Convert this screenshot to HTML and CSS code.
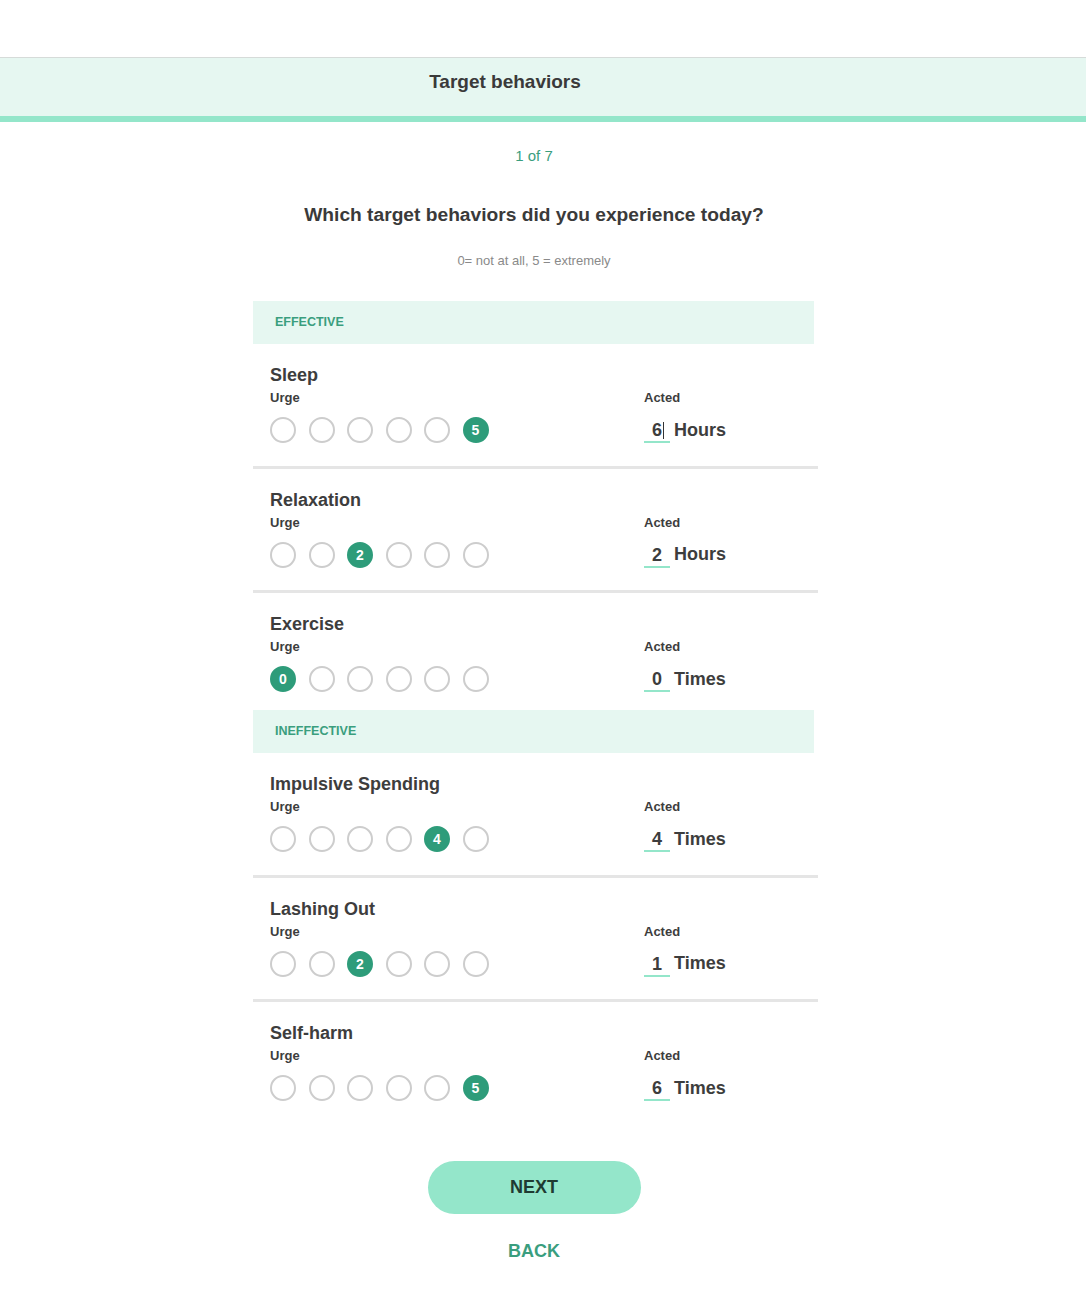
FILE: index.html
```html
<!DOCTYPE html>
<html>
<head>
<meta charset="utf-8">
<link rel="stylesheet" href="styles.css">
</head>
<body>
<div class="top-space"></div>
<header class="header"><h1 class="header-title">Target behaviors</h1></header>
<main class="main">
  <div class="step">1 of 7</div>
  <h2 class="question">Which target behaviors did you experience today?</h2>
  <div class="hint">0= not at all, 5 = extremely</div>

  <section class="list">
    <div class="section-head">EFFECTIVE</div>

    <div class="item divided">
      <div class="left">
        <div class="name">Sleep</div>
        <div class="label">Urge</div>
        <div class="scale">
          <span class="dot"></span><span class="dot"></span><span class="dot"></span><span class="dot"></span><span class="dot"></span><span class="dot on">5</span>
        </div>
      </div>
      <div class="right">
        <div class="label">Acted</div>
        <div class="acted"><span class="val cursor">6</span><span class="unit">Hours</span></div>
      </div>
    </div>

    <div class="item divided">
      <div class="left">
        <div class="name">Relaxation</div>
        <div class="label">Urge</div>
        <div class="scale">
          <span class="dot"></span><span class="dot"></span><span class="dot on">2</span><span class="dot"></span><span class="dot"></span><span class="dot"></span>
        </div>
      </div>
      <div class="right">
        <div class="label">Acted</div>
        <div class="acted"><span class="val">2</span><span class="unit">Hours</span></div>
      </div>
    </div>

    <div class="item last">
      <div class="left">
        <div class="name">Exercise</div>
        <div class="label">Urge</div>
        <div class="scale">
          <span class="dot on">0</span><span class="dot"></span><span class="dot"></span><span class="dot"></span><span class="dot"></span><span class="dot"></span>
        </div>
      </div>
      <div class="right">
        <div class="label">Acted</div>
        <div class="acted"><span class="val">0</span><span class="unit">Times</span></div>
      </div>
    </div>

    <div class="section-head">INEFFECTIVE</div>

    <div class="item divided">
      <div class="left">
        <div class="name">Impulsive Spending</div>
        <div class="label">Urge</div>
        <div class="scale">
          <span class="dot"></span><span class="dot"></span><span class="dot"></span><span class="dot"></span><span class="dot on">4</span><span class="dot"></span>
        </div>
      </div>
      <div class="right">
        <div class="label">Acted</div>
        <div class="acted"><span class="val">4</span><span class="unit">Times</span></div>
      </div>
    </div>

    <div class="item divided">
      <div class="left">
        <div class="name">Lashing Out</div>
        <div class="label">Urge</div>
        <div class="scale">
          <span class="dot"></span><span class="dot"></span><span class="dot on">2</span><span class="dot"></span><span class="dot"></span><span class="dot"></span>
        </div>
      </div>
      <div class="right">
        <div class="label">Acted</div>
        <div class="acted"><span class="val">1</span><span class="unit">Times</span></div>
      </div>
    </div>

    <div class="item last">
      <div class="left">
        <div class="name">Self-harm</div>
        <div class="label">Urge</div>
        <div class="scale">
          <span class="dot"></span><span class="dot"></span><span class="dot"></span><span class="dot"></span><span class="dot"></span><span class="dot on">5</span>
        </div>
      </div>
      <div class="right">
        <div class="label">Acted</div>
        <div class="acted"><span class="val">6</span><span class="unit">Times</span></div>
      </div>
    </div>
  </section>

  <div class="actions">
    <button class="next">NEXT</button>
    <button class="back">BACK</button>
  </div>
</main>
</body>
</html>
```

FILE: styles.css
```css
* { box-sizing: border-box; }
html, body { margin: 0; padding: 0; background: #fff; }
body {
  font-family: "Liberation Sans", Arial, Helvetica, sans-serif;
  color: #3d3d3d;
  width: 1086px;
}
.top-space { height: 57px; }
.header {
  border-top: 1px solid #d6dbd9;
  background: #e6f7f1;
  height: 65px;
  border-bottom: 6px solid #94e6ca;
  display: flex;
  align-items: center;
  justify-content: center;
  padding: 0 76px 10px 0;
}
.header-title {
  margin: 0;
  font-size: 19px;
  font-weight: bold;
  color: #3a3a3a;
  line-height: 22px;
}
.main {
  display: flex;
  flex-direction: column;
  align-items: center;
  padding-right: 18px;
}
.step {
  margin-top: 25px;
  font-size: 15px;
  line-height: 17px;
  color: #3a9e7e;
}
.question {
  margin: 40px 0 0;
  font-size: 19.2px;
  font-weight: bold;
  line-height: 22px;
  color: #3a3a3a;
}
.hint {
  margin-top: 27px;
  font-size: 13px;
  line-height: 15px;
  color: #8a8a8a;
}
.list {
  margin-top: 33px;
  width: 565px;
  margin-left: 3px;
}
.section-head {
  width: 561px;
  height: 43px;
  background: #e6f7f1;
  color: #3a9e7e;
  font-size: 12.5px;
  font-weight: bold;
  line-height: 43px;
  padding-left: 22px;
}
.item {
  display: grid;
  grid-template-columns: 374px 1fr;
  padding: 21px 0 22.5px 17px;
}
.item.divided { border-bottom: 3px solid #e5e5e5; }
.item.last { padding-bottom: 18px; }
.name {
  font-size: 18px;
  font-weight: bold;
  line-height: 20px;
  color: #3d3d3d;
}
.label {
  margin-top: 6px;
  font-size: 13px;
  font-weight: bold;
  line-height: 14px;
  color: #3d3d3d;
}
.right { padding-top: 20px; }
.scale {
  margin-top: 12px;
  display: flex;
  gap: 12.5px;
}
.dot {
  width: 26px;
  height: 26px;
  border-radius: 50%;
  border: 2px solid #cdcdcd;
  display: inline-flex;
  align-items: center;
  justify-content: center;
  font-size: 14px;
  font-weight: bold;
  color: #fff;
}
.dot.on {
  background: #2e9c7a;
  border-color: #2e9c7a;
}
.acted {
  margin-top: 12px;
  height: 26px;
  display: flex;
  align-items: center;
  font-size: 18px;
  font-weight: bold;
  color: #3d3d3d;
}
.val {
  width: 26px;
  text-align: center;
  border-bottom: 2px solid #94e6ca;
  padding-bottom: 1px;
  line-height: 20px;
  margin-top: 3px;
  position: relative;
}
.val.cursor::after {
  content: "";
  position: absolute;
  left: 19px;
  top: 2px;
  width: 1px;
  height: 17px;
  background: #333;
}
.unit { margin-left: 4px; }
.actions {
  display: flex;
  flex-direction: column;
  align-items: center;
  margin-top: 42px;
}
.next {
  width: 213px;
  height: 53px;
  border: none;
  border-radius: 27px;
  background: #94e6ca;
  color: #1f3b32;
  font-family: inherit;
  font-size: 18px;
  font-weight: bold;
}
.back {
  margin-top: 27px;
  border: none;
  background: none;
  color: #3a9e7e;
  font-family: inherit;
  font-size: 18px;
  font-weight: bold;
  padding: 0;
}
```
